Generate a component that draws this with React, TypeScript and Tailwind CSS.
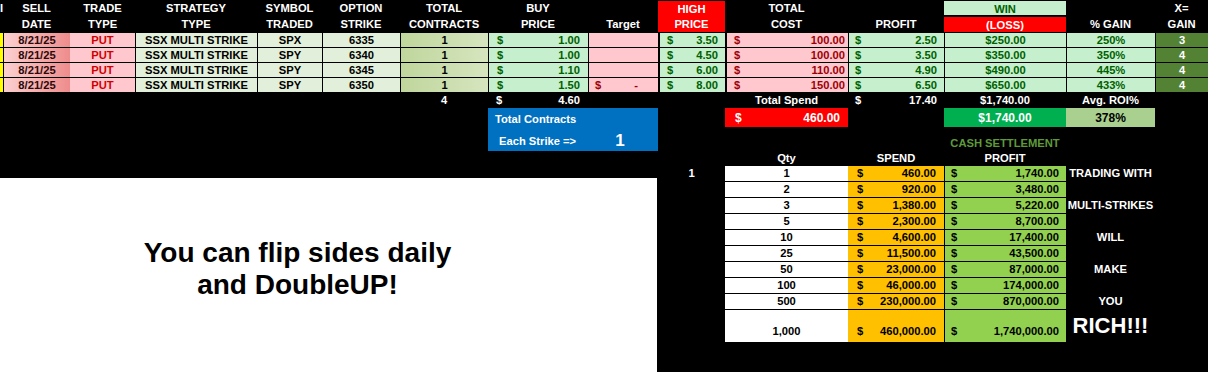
const grid =
  "grid grid-cols-[3px_67px_65px_122px_65px_78px_88px_100px_70px_67px_123px_96px_122px_89px_53px]"

const rows = [
  { sym: "SPX", strike: "6335", buy: "1.00", target: false, high: "3.50", cost: "100.00", profit: "2.50", win: "$250.00", gain: "250%", x: "3" },
  { sym: "SPY", strike: "6340", buy: "1.00", target: false, high: "4.50", cost: "100.00", profit: "3.50", win: "$350.00", gain: "350%", x: "4" },
  { sym: "SPY", strike: "6345", buy: "1.10", target: false, high: "6.00", cost: "110.00", profit: "4.90", win: "$490.00", gain: "445%", x: "4" },
  { sym: "SPY", strike: "6350", buy: "1.50", target: true, high: "8.00", cost: "150.00", profit: "6.50", win: "$650.00", gain: "433%", x: "4" },
]

const settle = [
  { q: "1", spend: "460.00", profit: "1,740.00", note: "TRADING WITH" },
  { q: "2", spend: "920.00", profit: "3,480.00", note: "" },
  { q: "3", spend: "1,380.00", profit: "5,220.00", note: "MULTI-STRIKES" },
  { q: "5", spend: "2,300.00", profit: "8,700.00", note: "" },
  { q: "10", spend: "4,600.00", profit: "17,400.00", note: "WILL" },
  { q: "25", spend: "11,500.00", profit: "43,500.00", note: "" },
  { q: "50", spend: "23,000.00", profit: "87,000.00", note: "MAKE" },
  { q: "100", spend: "46,000.00", profit: "174,000.00", note: "" },
  { q: "500", spend: "230,000.00", profit: "870,000.00", note: "YOU" },
]

const Head = ({ top, bottom }: { top?: string; bottom?: string }) => (
  <div className="flex flex-col items-center text-white">
    <div className="h-[16px]">{top}</div>
    <div className="h-[16px]">{bottom}</div>
  </div>
)

const Money = ({ v, cls }: { v: string; cls: string }) => (
  <div className={"flex justify-between items-center border-l border-black " + cls}>
    <span>$</span>
    <span>{v}</span>
  </div>
)

export default function App() {
  return (
    <div
      className="w-[1208px] h-[372px] bg-black overflow-hidden font-bold text-[11.2px] leading-[14px]"
      style={{ fontFamily: '"Liberation Sans", Arial, sans-serif' }}
    >
      {/* header */}
      <div className={grid + " h-[32px] leading-[16px]"}>
        <div className="text-white overflow-hidden">I</div>
        <Head top="SELL" bottom="DATE" />
        <Head top="TRADE" bottom="TYPE" />
        <Head top="STRATEGY" bottom="TYPE" />
        <Head top="SYMBOL" bottom="TRADED" />
        <Head top="OPTION" bottom="STRIKE" />
        <Head top="TOTAL" bottom="CONTRACTS" />
        <Head top="BUY" bottom="PRICE" />
        <Head bottom="Target" />
        <div className="flex flex-col items-center justify-center bg-[#ff0000] text-white mt-px">
          <div className="h-[15px]">HIGH</div>
          <div className="h-[16px]">PRICE</div>
        </div>
        <Head top="TOTAL" bottom="COST" />
        <Head bottom="PROFIT" />
        <div className="flex flex-col">
          <div className="h-[14px] mt-px bg-[#c6efce] text-[#006100] text-center">WIN</div>
          <div className="h-[15px] mt-[2px] bg-[#ff0000] text-white text-center">(LOSS)</div>
        </div>
        <Head bottom="% GAIN" />
        <Head top="X=" bottom="GAIN" />
      </div>

      {/* trades */}
      {rows.map((r, i) => (
        <div key={i} className={grid + " h-[15px] border-t border-black"}>
          <div className="bg-[#ffff00]" />
          <div className="border-l border-black bg-gradient-to-r from-[#fbd0d0] to-[#ee8c8c] text-[#2a0a0a] text-center">8/21/25</div>
          <div className="bg-[#ffc7ce] text-[#d00000] text-center">PUT</div>
          <div className="border-l border-black bg-[#e2efda] text-black text-center">SSX MULTI STRIKE</div>
          <div className="border-l border-black bg-[#e2efda] text-black text-center">{r.sym}</div>
          <div className="border-l border-black bg-[#e2efda] text-black text-center">{r.strike}</div>
          <div className="border-l border-black bg-gradient-to-r from-[#bfd69c] to-[#d6e5bf] text-black text-center">1</div>
          <Money v={r.buy} cls="bg-[#c6efce] text-[#006100] pl-[8px] pr-[8px]" />
          {r.target ? (
            <div className="flex justify-between border-l border-black bg-[#ffc7ce] text-[#9c0006] pl-[6px] pr-[20px]">
              <span>$</span>
              <span>-</span>
            </div>
          ) : (
            <div className="border-l border-black bg-[#ffc7ce]" />
          )}
          <Money v={r.high} cls="border-l-2 bg-[#c6efce] text-[#006100] pl-[7px] pr-[7px]" />
          <Money v={r.cost} cls="border-l-2 bg-[#ffc7ce] text-[#9c0006] pl-[7px] pr-[3px]" />
          <Money v={r.profit} cls="bg-[#c6efce] text-[#006100] pl-[6px] pr-[7px]" />
          <div className="border-l border-black bg-[#c6efce] text-[#006100] text-center">{r.win}</div>
          <div className="border-l border-black bg-[#c6efce] text-[#006100] text-center">{r.gain}</div>
          <div className="border-l border-black bg-[#548235] text-white text-center">{r.x}</div>
        </div>
      ))}

      {/* totals */}
      <div className={grid + " h-[16px] border-t border-black text-white leading-[15px]"}>
        <div className="col-start-7 text-center">4</div>
        <div className="flex justify-between pl-[8px] pr-[8px]">
          <span>$</span>
          <span>4.60</span>
        </div>
        <div className="col-start-11 text-center">Total Spend</div>
        <div className="flex justify-between pl-[7px] pr-[7px]">
          <span>$</span>
          <span>17.40</span>
        </div>
        <div className="text-center">$1,740.00</div>
        <div className="text-center">Avg. ROI%</div>
      </div>

      {/* summary boxes */}
      <div className={grid + " grid-rows-[19px_24px_15px] text-white"}>
        <div className="col-start-8 col-span-2 row-span-2 bg-[#0070c0] flex flex-col pl-[7px]">
          <div className="mt-[4px]">Total Contracts</div>
          <div className="flex items-center mt-[6px] pl-[4px]">
            <span>Each Strike =&gt;</span>
            <span className="ml-[39px] text-[17px] leading-[18px]">1</span>
          </div>
        </div>
        <div className="col-start-11 row-start-1 bg-[#ff0000] flex justify-between items-center pl-[10px] pr-[8px] text-[12px]">
          <span>$</span>
          <span>460.00</span>
        </div>
        <div className="col-start-13 row-start-1 bg-[#00b050] flex items-center justify-center text-[12px]">$1,740.00</div>
        <div className="col-start-14 row-start-1 bg-[#a9d08e] text-black flex items-center justify-center text-[12px]">378%</div>
        <div className="col-start-13 row-start-2 text-[#5e9a3a] text-center pt-[9px]">CASH SETTLEMENT</div>
        <div className="col-start-11 row-start-3 text-center">Qty</div>
        <div className="col-start-12 row-start-3 text-center">SPEND</div>
        <div className="col-start-13 row-start-3 text-center">PROFIT</div>
      </div>

      {/* lower part */}
      <div className="flex">
        <div className="w-[658px] flex flex-col">
          <div className="h-[12px]" />
          <div className="w-[657px] h-[194px] bg-white flex flex-col items-center justify-center pb-[12px] pr-[62px] text-black text-[28px] leading-[32px]">
            <div>You can flip sides daily</div>
            <div>and DoubleUP!</div>
          </div>
        </div>
        <div className="grid grid-cols-[67px_123px_96px_122px_89px_53px] auto-rows-[16px]">
          {settle.map((s, i) => (
            <div key={i} className="contents">
              <div className="text-white text-center">{i === 0 ? "1" : ""}</div>
              <div className="bg-white text-black text-center border-b border-black leading-[15px]">{s.q}</div>
              <div className="bg-[#ffc000] text-black flex justify-between pl-[9px] pr-[8px] border-b border-black leading-[15px]">
                <span>$</span>
                <span>{s.spend}</span>
              </div>
              <div className="bg-[#92d050] text-black flex justify-between pl-[6px] pr-[7px] border-b border-l border-black leading-[15px]">
                <span>$</span>
                <span>{s.profit}</span>
              </div>
              <div className="text-white text-center whitespace-nowrap">{s.note}</div>
              <div />
            </div>
          ))}
          <div />
          <div className="row-span-2 bg-white text-black flex items-center justify-center pt-[10px]">1,000</div>
          <div className="row-span-2 bg-[#ffc000] text-black flex justify-between items-center pl-[9px] pr-[8px] pt-[10px]">
            <span>$</span>
            <span>460,000.00</span>
          </div>
          <div className="row-span-2 bg-[#92d050] text-black flex justify-between items-center pl-[6px] pr-[7px] pt-[10px] border-l border-black">
            <span>$</span>
            <span>1,740,000.00</span>
          </div>
          <div className="row-span-2 text-white text-[22px] leading-[24px] pt-[4px] text-center whitespace-nowrap">RICH!!!</div>
        </div>
      </div>
    </div>
  )
}
